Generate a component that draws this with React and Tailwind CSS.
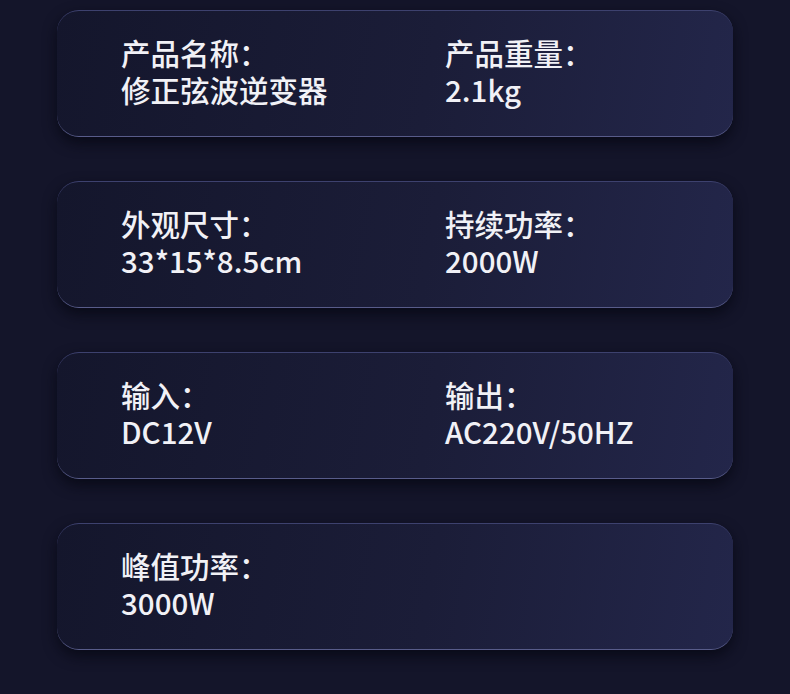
import React from "react";

const rows = [
  [
    { label: "产品名称：", value: "修正弦波逆变器" },
    { label: "产品重量：", value: "2.1kg" },
  ],
  [
    { label: "外观尺寸：", value: "33*15*8.5cm" },
    { label: "持续功率：", value: "2000W" },
  ],
  [
    { label: "输入：", value: "DC12V" },
    { label: "输出：", value: "AC220V/50HZ" },
  ],
  [{ label: "峰值功率：", value: "3000W" }],
];

const SpecCard = ({ items }) => {
  return (
    <div className="h-[127px] rounded-[22px] border-t border-b border-t-[#3d416e] border-b-[#585c8a] bg-[linear-gradient(100deg,#14162c_0%,#1b1d38_55%,#23264a_100%)] pl-[64px] pt-[23px] shadow-[0_6px_14px_rgba(6,7,18,0.75)]">
      <div className="grid grid-cols-[324px_1fr]">
        {items.map((item) => (
          <div key={item.label} className="text-[29.5px] leading-[37px] font-medium text-[#f1f1f6]">
            <div>{item.label}</div>
            <div>{item.value}</div>
          </div>
        ))}
      </div>
    </div>
  );
};

export default function App() {
  return (
    <div
      className="min-h-[694px] w-full bg-[#14152a] px-[57px] pt-[10px]"
      style={{ fontFamily: '"Noto Sans CJK SC", "Noto Sans", sans-serif' }}
    >
      <div className="flex flex-col gap-[44px]">
        {rows.map((items, i) => (
          <SpecCard key={i} items={items} />
        ))}
      </div>
    </div>
  );
}
